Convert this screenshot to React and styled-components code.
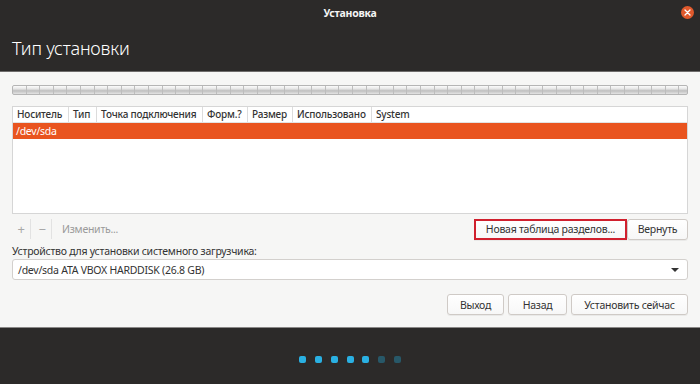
import React from "react";
import styled, { createGlobalStyle } from "styled-components";

const GlobalStyle = createGlobalStyle`
  html, body { margin: 0; padding: 0; }
  body {
    background: #f6f6f5;
    font-family: "Noto Sans", "DejaVu Sans", sans-serif;
    font-size: 10.5px;
    letter-spacing: -0.25px;
    color: #3c3c3c;
  }
  * { box-sizing: border-box; }
`;

const Window = styled.div`
  width: 700px;
  height: 384px;
  display: flex;
  flex-direction: column;
  overflow: hidden;
`;

const Header = styled.header`
  height: 72px;
  background: #2c2a29;
  border-bottom: 1px solid #6e6c6b;
  display: flex;
  flex-direction: column;
  color: #ffffff;
`;

const TitleBar = styled.div`
  height: 25px;
  display: flex;
  align-items: center;
  justify-content: center;
  position: relative;
`;

const WindowTitle = styled.span`
  font-weight: 700;
  font-size: 10.5px;
  color: #f4f4f4;
`;

const CloseButton = styled.span`
  position: absolute;
  right: 6px;
  top: 6px;
  width: 13px;
  height: 13px;
  border-radius: 50%;
  background: #e0592c;
  display: flex;
  align-items: center;
  justify-content: center;
`;

const PageTitle = styled.h1`
  margin: 11px 0 0 12px;
  font-size: 18px;
  font-weight: 300;
  color: #ffffff;
  letter-spacing: -0.2px;
`;

const Content = styled.main`
  flex: 1;
  display: flex;
  flex-direction: column;
  padding: 13px 12px 0 12px;
`;

const PartitionBar = styled.div`
  height: 10px;
  border: 1px solid #b5b5b5;
  border-radius: 2px;
  background:
    repeating-linear-gradient(90deg, transparent 0, transparent 12.6px, #bdbdbd 12.6px, #bdbdbd 13.6px),
    linear-gradient(#fbfbfb 0%, #e6e6e6 35%, #bfbfbf 60%, #e4e4e4 100%);
`;

const Table = styled.div`
  margin-top: 11px;
  height: 108px;
  background: #ffffff;
  border: 1px solid #d6d6d6;
  display: flex;
  flex-direction: column;
`;

const HeaderRow = styled.div`
  display: flex;
  height: 16px;
  border-bottom: 1px solid #e2e2e2;
`;

const HeaderCell = styled.div`
  width: ${(p) => (p.$w ? `${p.$w}px` : "auto")};
  flex: ${(p) => (p.$w ? "none" : "1")};
  padding-left: 4px;
  line-height: 15px;
  font-size: 10px;
  font-weight: 500;
  letter-spacing: -0.2px;
  color: #333;
  border-left: ${(p) => (p.$first ? "none" : "1px solid #dcdcdc")};
  white-space: nowrap;
  overflow: hidden;
`;

const SelectedRow = styled.div`
  height: 16px;
  background: #e9541f;
  color: #ffffff;
  padding-left: 3px;
  line-height: 16px;
  font-size: 10.5px;
`;

const Toolbar = styled.div`
  margin-top: 4px;
  height: 22px;
  display: flex;
  align-items: center;
`;

const ToolIcon = styled.span`
  width: 19px;
  display: flex;
  justify-content: center;
  color: #a8a8a8;
  font-size: 13px;
  border-right: 1px solid #e2e2e2;
  height: 20px;
  align-items: center;
  margin-left: ${(p) => (p.$first ? "0" : "2px")};
`;

const ToolLabel = styled.span`
  margin-left: 10px;
  color: #9a9a9a;
`;

const Spacer = styled.div`
  flex: 1;
`;

const Button = styled.button`
  font-family: inherit;
  font-size: 10.5px;
  letter-spacing: -0.25px;
  color: #333;
  height: 21px;
  width: ${(p) => `${p.$w}px`};
  padding: 0;
  background: linear-gradient(#ffffff, #f7f7f7);
  border: ${(p) => (p.$marked ? "2px solid #d0202e" : "1px solid #cfcac6")};
  border-radius: ${(p) => (p.$marked ? "0" : "3px")};
  box-shadow: 0 1px 0 rgba(0, 0, 0, 0.05);
  white-space: nowrap;
`;

const Label = styled.div`
  margin-top: 4px;
  color: #333;
  line-height: 14px;
`;

const Combo = styled.div`
  margin-top: 1px;
  height: 21px;
  background: #ffffff;
  border: 1px solid #d3d0cd;
  border-radius: 3px;
  display: flex;
  align-items: center;
  padding: 0 8px 0 5px;
  color: #333;
`;

const Arrow = styled.span`
  margin-left: auto;
  width: 0;
  height: 0;
  border-left: 4px solid transparent;
  border-right: 4px solid transparent;
  border-top: 4px solid #333;
`;

const Actions = styled.div`
  margin-top: 14px;
  display: flex;
  justify-content: flex-end;
  gap: 4px;
`;

const Footer = styled.footer`
  height: 57px;
  background: #2c2a29;
  border-top: 1px solid #8a8887;
  display: flex;
  justify-content: center;
  padding-top: 28px;
`;

const Dots = styled.div`
  display: flex;
  gap: 8.7px;
`;

const Dot = styled.span`
  width: 7px;
  height: 7px;
  border-radius: 2px;
  background: ${(p) => (p.$on ? "#2ab0e2" : "#285868")};
`;

const columns = [
  { name: "Носитель", w: 55 },
  { name: "Тип", w: 28 },
  { name: "Точка подключения", w: 106 },
  { name: "Форм.?", w: 45 },
  { name: "Размер", w: 45 },
  { name: "Использовано", w: 79 },
  { name: "System" },
];

export default function App() {
  return (
    <Window>
      <GlobalStyle />
      <Header>
        <TitleBar>
          <WindowTitle>Установка</WindowTitle>
          <CloseButton>
            <svg width="7" height="7" viewBox="0 0 7 7">
              <path d="M1 1L6 6M6 1L1 6" stroke="#fff" strokeWidth="1.3" strokeLinecap="round" />
            </svg>
          </CloseButton>
        </TitleBar>
        <PageTitle>Тип установки</PageTitle>
      </Header>
      <Content>
        <PartitionBar />
        <Table>
          <HeaderRow>
            {columns.map((c, i) => (
              <HeaderCell key={c.name} $w={c.w} $first={i === 0}>
                {c.name}
              </HeaderCell>
            ))}
          </HeaderRow>
          <SelectedRow>/dev/sda</SelectedRow>
        </Table>
        <Toolbar>
          <ToolIcon $first>+</ToolIcon>
          <ToolIcon>−</ToolIcon>
          <ToolLabel>Изменить...</ToolLabel>
          <Spacer />
          <Button $marked $w={153}>Новая таблица разделов...</Button>
          <Button $w={61}>Вернуть</Button>
        </Toolbar>
        <Label>Устройство для установки системного загрузчика:</Label>
        <Combo>
          /dev/sda ATA VBOX HARDDISK (26.8 GB)
          <Arrow />
        </Combo>
        <Actions>
          <Button $w={57}>Выход</Button>
          <Button $w={59}>Назад</Button>
          <Button $w={117}>Установить сейчас</Button>
        </Actions>
      </Content>
      <Footer>
        <Dots>
          {[1, 1, 1, 1, 1, 0, 0].map((on, i) => (
            <Dot key={i} $on={!!on} />
          ))}
        </Dots>
      </Footer>
    </Window>
  );
}
